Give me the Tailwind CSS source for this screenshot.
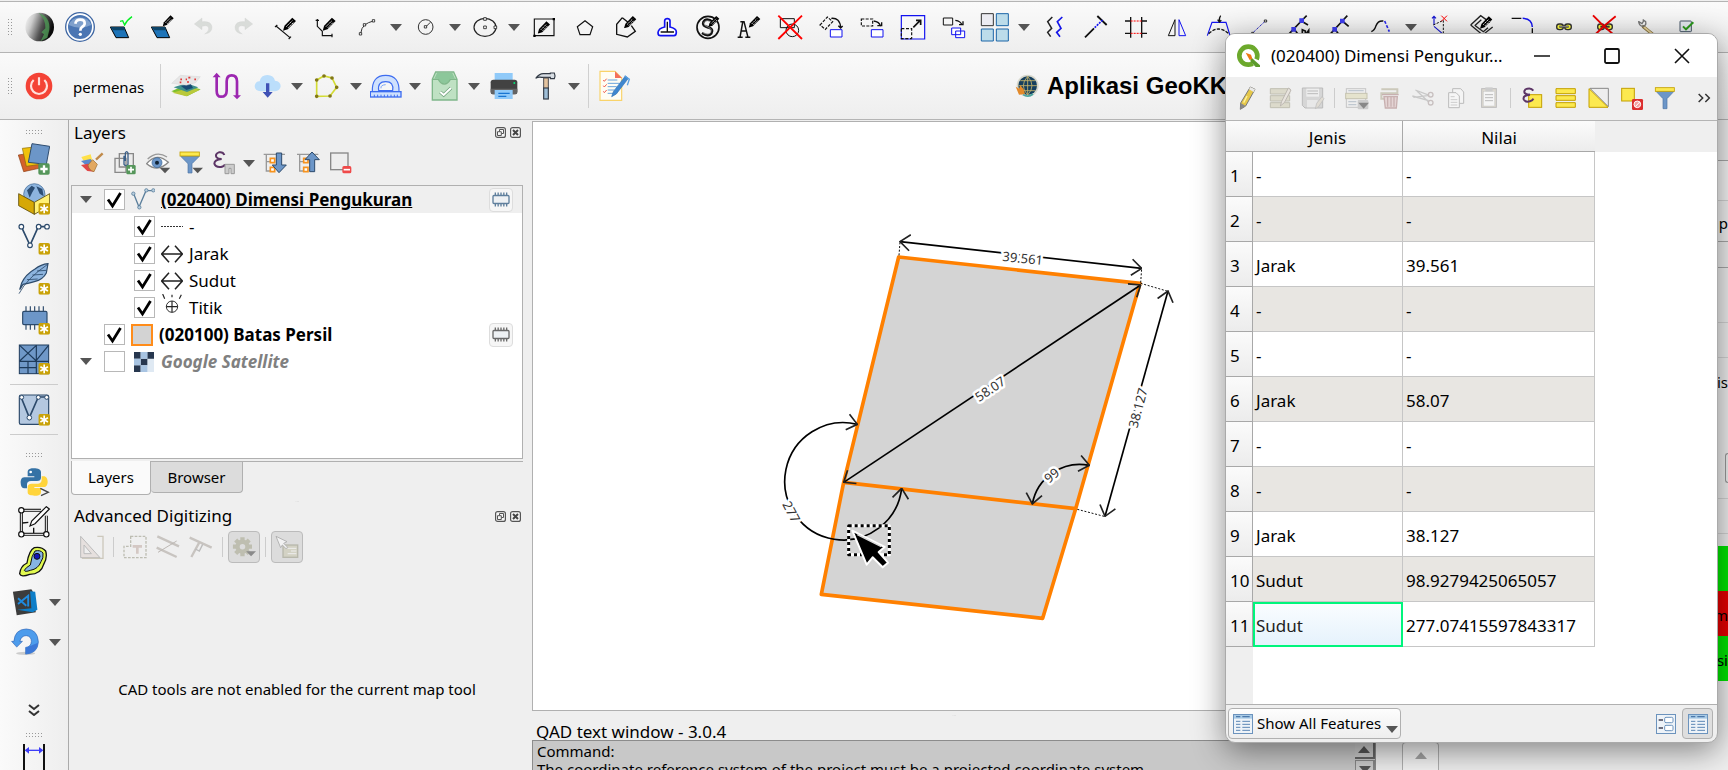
<!DOCTYPE html>
<html lang="id">
<head>
<meta charset="utf-8">
<title>GeoKK</title>
<script src="https://cdn.jsdelivr.net/npm/@tailwindcss/browser@4"></script>
</head>
<body class="relative flex h-screen flex-col overflow-hidden bg-[#efefef] font-['Noto_Sans','Open_Sans',sans-serif] text-[15px] text-black">

<svg class="hidden">
  <symbol id="pen" viewBox="0 0 36 36"><path d="M0 36L4 23L25 1L35 10L13 32Z" fill="#000"/><path d="M9 25L25 9M14 28L29 13" stroke="#fff" stroke-width="2.500" stroke-dasharray="5 2"/></symbol>
  <symbol id="tick" viewBox="0 0 21 21"><path d="M4 10.500L8.500 17L16.500 4" fill="none" stroke="#000" stroke-width="2.800"/></symbol>
  <symbol id="arr" viewBox="0 0 12 7"><path d="M0 0H12L6 7Z" fill="#555"/></symbol>
  <symbol id="star" viewBox="0 0 12 12"><rect width="12" height="12" rx="2" fill="#c9a208"/><path d="M6 1.500V10.500M2.100 3.800L9.900 8.200M9.900 3.800L2.100 8.200" stroke="#fff" stroke-width="1.700"/></symbol>
  <symbol id="chip" viewBox="0 0 54 44"><path d="M10 1V43M18.500 1V43M27 1V43M35.500 1V43M44 1V43" stroke="currentColor" stroke-width="4"/><rect x="3" y="10" width="48" height="24" rx="3" fill="#eef1f4" stroke="currentColor" stroke-width="4"/></symbol>
  <symbol id="dim" viewBox="0 0 66 54"><path d="M2 27H64M24 2L2 27L24 52M42 2L64 27L42 52" stroke="#222" stroke-width="4.500" fill="none"/></symbol>
  <symbol id="float" viewBox="0 0 11 11"><rect x=".6" y=".6" width="9.800" height="9.800" rx="2" fill="#f6f6f6" stroke="#555" stroke-width="1.200"/><path d="M4.500 4.500V2.500H8.500V6.500H6.500M2.500 4.700H6.300V8.500H2.500Z" fill="none" stroke="#555"/></symbol>
  <symbol id="closeb" viewBox="0 0 11 11"><rect x=".6" y=".6" width="9.800" height="9.800" rx="2" fill="#f6f6f6" stroke="#555" stroke-width="1.200"/><path d="M3 3L8 8M8 3L3 8" stroke="#444" stroke-width="2"/></symbol>
  <symbol id="tableico" viewBox="0 0 60 60"><rect x="1.500" y="1.500" width="57" height="57" fill="#eef3f8" stroke="#6c93bd" stroke-width="3"/><rect x="3" y="3" width="54" height="11" fill="#a9cbe6"/><path d="M9 8H22M28 8H50" stroke="#4d79ab" stroke-width="4"/><path d="M9 22H22M9 31H22M9 40H22M9 49H22M28 22H51M28 31H51M28 40H51M28 49H51" stroke="#5d87b5" stroke-width="3"/></symbol>
  <symbol id="grip" viewBox="0 0 5 17"><path d="M.5 0V17M3.500 0V17" stroke="#999" stroke-dasharray="1 2"/></symbol>
  <symbol id="griph" viewBox="0 0 17 5"><path d="M0 .5H17M0 3.500H17" stroke="#999" stroke-dasharray="1 2"/></symbol>
</svg>

<!-- QAD toolbar -->
<header class="shrink-0">
<div class="mt-px flex h-[52px] items-center overflow-hidden border-y border-[#b4b4b4] bg-gradient-to-b from-[#fafafa] to-[#eeeeee] pl-2 [&_button]:flex [&_button]:h-8 [&_button]:w-[41px] [&_button]:shrink-0 [&_button]:items-center [&_button]:justify-center [&_button.drop]:w-[18px] [&_button>svg]:size-8 [&_button.drop>svg]:h-[7px] [&_button.drop>svg]:w-3" role="toolbar" aria-label="QAD">
  <svg class="mr-[5px] h-[17px] w-[5px] shrink-0"><use href="#grip"/></svg>
  <button aria-label="Globe"><svg viewBox="69 32 96 96"><defs><linearGradient id="gg" x2="1" y2=".35"><stop offset="0" stop-color="#fff"/><stop offset=".3" stop-color="#ccc"/><stop offset=".65" stop-color="#555"/><stop offset="1" stop-color="#0a0a0a"/></linearGradient></defs><circle cx="119" cy="80" r="43" fill="url(#gg)"/><path d="M116 38Q152 50 148 88L142 112L122 122L132 102L124 96L136 84Q138 58 116 38Z" fill="#4f9a56" opacity=".8"/></svg></button>
  <button aria-label="Help"><svg viewBox="192 32 96 96"><circle cx="240" cy="80" r="43" fill="#fff" stroke="#3f67a3" stroke-width="4"/><circle cx="240" cy="80" r="36" fill="#4b76b3"/><path d="M206 74A36 34 0 0 1 274 74Q240 90 206 74" fill="#7fa0cc"/><path d="M226 70Q228 58 241 58Q254 58 254 69Q254 76 246 80Q241 83 241 91" fill="none" stroke="#fff" stroke-width="8"/><circle cx="241" cy="102" r="5" fill="#fff"/></svg></button>
  <button aria-label="Grip edit"><svg viewBox="315 32 96 96"><path d="M331 80H372L386 112H348Z" fill="#1e74b8" stroke="#000" stroke-width="3"/><path d="M331 80H372L376 90H340Z" fill="#0c4468"/><path d="M360 63L368 61L374 74Q380 60 396 49" fill="none" stroke="#00f020" stroke-width="4"/></svg></button>
  <button aria-label="Layer edit"><svg viewBox="438 32 96 96"><path d="M454 80H495L509 112H471Z" fill="#1e74b8" stroke="#000" stroke-width="3"/><path d="M454 80H495L499 90H463Z" fill="#0c4468"/><use href="#pen" x="488" y="44" width="34" height="34"/></svg></button>
  <button aria-label="Undo"><svg viewBox="561 32 96 96"><path d="M606 53L583 71L606 88V78Q626 72 626 86Q626 94 614 101Q636 98 636 80Q634 62 606 64Z" fill="#d9dcd9" stroke="#cfcfcf"/></svg></button>
  <button aria-label="Redo"><svg viewBox="684 32 96 96"><path d="M735 53L758 71L735 88V78Q715 72 715 86Q715 94 727 101Q705 98 705 80Q707 62 735 64Z" fill="#d9dcd9" stroke="#cfcfcf"/></svg></button>
  <button aria-label="Line"><svg viewBox="807 32 96 96"><path d="M828 77L870 112M825 80L832 74M866 116L873 109" stroke="#111" stroke-width="3.500"/><use href="#pen" x="849" y="50" width="40" height="42"/></svg></button>
  <button aria-label="Polyline"><svg viewBox="930 32 96 96"><path d="M952 56V78L967 93V106H998M947 60H957M996 100V111" fill="none" stroke="#111" stroke-width="3.500"/><use href="#pen" x="968" y="50" width="40" height="42"/></svg></button>
  <button aria-label="Arc"><svg viewBox="1053 32 96 96"><path d="M1082 100Q1084 82 1094 74Q1104 66 1120 62" fill="none" stroke="#333" stroke-width="3"/><path d="M1078 97H1085V104H1078ZM1090 70H1097V77H1090ZM1117 58H1124V65H1117Z" fill="#fff" stroke="#222" stroke-width="2.500"/></svg></button><button class="drop" aria-label="Arc options"><svg><use href="#arr"/></svg></button>
  <button aria-label="Circle"><svg viewBox="1230 32 96 96"><circle cx="1277" cy="80" r="22" fill="none" stroke="#333" stroke-width="3"/><path d="M1277 80L1291 66" stroke="#333" stroke-width="3"/><path d="M1273 76H1280V83H1273Z" fill="#fff" stroke="#222" stroke-width="2.500"/></svg></button><button class="drop" aria-label="Circle options"><svg><use href="#arr"/></svg></button>
  <button aria-label="Ellipse"><svg viewBox="117 32 96 96"><ellipse cx="165" cy="81" rx="33" ry="27" fill="none" stroke="#222" stroke-width="3.500"/><path d="M161 77H169V85H161ZM161 52H169V60H161ZM192 77H200V85H192Z" fill="#fff" stroke="#222" stroke-width="2.500"/></svg></button><button class="drop" aria-label="Ellipse options"><svg><use href="#arr"/></svg></button>
  <button aria-label="Rectangle"><svg viewBox="294 32 96 96"><path d="M313 56H372V106H313Z" fill="none" stroke="#111" stroke-width="3.500"/><path d="M368 53H375V60H368ZM310 103H317V110H310Z"/><use href="#pen" x="323" y="62" width="38" height="38"/></svg></button>
  <button aria-label="Polygon"><svg viewBox="417 32 96 96"><path d="M465 61L488 79L480 103H450L442 79Z" fill="none" stroke="#111" stroke-width="3.500"/></svg></button>
  <button aria-label="Draw polygon"><svg viewBox="540 32 96 96"><path d="M577 52L560 72V102L592 110L616 93L604 76M577 52L594 66" fill="none" stroke="#111" stroke-width="4"/><use href="#pen" x="582" y="46" width="38" height="38"/></svg></button>
  <button aria-label="Stamp"><svg viewBox="663 32 96 96"><path d="M704 80V61Q705 55 712 55Q719 55 720 61V80Q739 84 739 95Q739 106 732 106H692Q684 106 684 97Q685 84 704 80Z" fill="#fff" stroke="#1212f0" stroke-width="5"/><path d="M712 64V94M692 95H732" stroke="#111" stroke-width="4"/></svg></button>
  <button aria-label="Symbol"><svg viewBox="786 32 96 96"><circle cx="834" cy="81" r="33" fill="none" stroke="#111" stroke-width="5"/><path d="M850 66Q828 50 820 66Q816 77 834 81Q852 86 844 99Q834 110 816 98" fill="none" stroke="#111" stroke-width="8"/><path d="M849 68Q828 55 822 67Q820 76 836 81Q848 86 842 97Q834 105 819 97" fill="none" stroke="#fff" stroke-width="1.500"/><use href="#pen" x="834" y="46" width="36" height="34"/></svg></button>
  <button aria-label="Text"><svg viewBox="909 32 96 96"><path d="M931 64H942L954 111M938 66L930 111M923 111H938M946 111H961M933 92H949" fill="none" stroke="#111" stroke-width="4.500"/><use href="#pen" x="955" y="46" width="38" height="36"/></svg></button>
  <button aria-label="Erase"><svg viewBox="1032 32 96 96"><path d="M1051 55H1093V82H1051Z" fill="none" stroke="#111" stroke-width="3"/><circle cx="1087" cy="90" r="19" fill="none" stroke="#111" stroke-width="3"/><path d="M1045 46L1116 116M1116 46L1045 116" stroke="#f00" stroke-width="5.500"/></svg></button>
  <button aria-label="Rotate"><svg viewBox="1155 32 96 96"><path d="M1170 74L1192 50L1208 64L1186 87Z" fill="none" stroke="#111" stroke-width="3.500" stroke-dasharray="9 4"/><path d="M1204 54Q1230 52 1232 82M1225 76L1232 83L1238 77" fill="none" stroke="#111" stroke-width="4"/><path d="M1201 88H1236V110H1201Z" fill="#fff" stroke="#1212f0" stroke-width="3"/></svg></button>
  <button aria-label="Move"><svg viewBox="-12 32 96 96"><path d="M4 56H38V77H4Z" fill="none" stroke="#111" stroke-width="3.500" stroke-dasharray="9 4"/><path d="M41 62Q58 64 62 78M52 76H65V66" fill="none" stroke="#111" stroke-width="4"/><path d="M34 88H69V110H34Z" fill="#fff" stroke="#1212f0" stroke-width="3"/></svg></button>
  <button aria-label="Scale"><svg viewBox="111 32 96 96"><path d="M124 46H194V116H124Z" fill="#f8f8f8" stroke="#1212f0" stroke-width="3.500"/><path d="M124 85H155V115M124 85V115H155" fill="none" stroke="#111" stroke-width="3.500" stroke-dasharray="9 5"/><path d="M160 81L180 61M168 60H182V74" fill="none" stroke="#111" stroke-width="5"/></svg></button>
  <button aria-label="Copy"><svg viewBox="234 32 96 96"><path d="M250 53H278V74H250Z" fill="none" stroke="#111" stroke-width="3"/><path d="M286 60Q302 62 306 74M297 73H309V63" fill="none" stroke="#111" stroke-width="4"/><path d="M275 83H302V103H275ZM287 92H314V112H287Z" fill="#fff" stroke="#1212f0" stroke-width="3"/></svg></button>
  <button aria-label="Array"><svg viewBox="357 32 96 96"><path d="M364 40H400V76H364Z" fill="#ececf2" stroke="#333" stroke-width="3"/><path d="M409 40H445V76H409ZM364 86H400V122H364ZM409 86H445V122H409Z" fill="#bcdcea" stroke="#1c66a8" stroke-width="3"/></svg></button><button class="drop" aria-label="Array options"><svg><use href="#arr"/></svg></button>
  <button aria-label="Offset"><svg viewBox="534 32 96 96"><path d="M577 50L563 64L575 84L563 96L572 109" fill="none" stroke="#222" stroke-width="4.500"/><path d="M607 50L592 64L603 84L590 96L600 109" fill="none" stroke="#1515e8" stroke-width="5"/></svg></button>
  <button aria-label="Extend"><svg viewBox="657 32 96 96"><path d="M675 111L702 84M712 47L740 74" stroke="#111" stroke-width="5.500"/><path d="M704 82L728 59" stroke="#1515f0" stroke-width="5" stroke-dasharray="6 3"/></svg></button>
  <button aria-label="Trim"><svg viewBox="780 32 96 96"><path d="M812 50V112M845 50V112M795 62H812M795 99H812M845 62H861M845 99H861" stroke="#111" stroke-width="4"/><path d="M812 62H845M812 99H845" stroke="#f00" stroke-width="3" stroke-dasharray="6 3"/></svg></button>
  <button aria-label="Mirror"><svg viewBox="903 32 96 96"><path d="M945 58V106H925Z" fill="none" stroke="#111" stroke-width="3"/><path d="M957 58V106H977Z" fill="none" stroke="#1212f0" stroke-width="3"/></svg></button>
  <button aria-label="Stretch"><svg viewBox="1026 32 96 96"><path d="M1042 106L1056 66H1098L1110 106" fill="none" stroke="#1212f0" stroke-width="3.500"/><path d="M1046 100Q1076 72 1106 100" fill="none" stroke="#111" stroke-width="4" stroke-dasharray="10 4"/><path d="M1082 46Q1077 52 1078 64M1073 58L1078 65L1084 60" fill="none" stroke="#111" stroke-width="4"/></svg></button>
  <button aria-label="Break"><svg viewBox="69 32 96 96"><path d="M98 98L136 62" stroke="#2020c0" stroke-width="3" stroke-dasharray="4 2"/><path d="M95 96H101V103H95ZM133 59H140V65H133Z" fill="#fff" stroke="#111" stroke-width="2.500"/></svg></button>
  <button aria-label="Join"><svg viewBox="192 32 96 96"><path d="M208 100L244 62L260 46M244 62L264 74M222 86L236 104M247 108V88L256 92V104L266 90V108" fill="none" stroke="#111" stroke-width="5"/><path d="M238 54H252V68H238ZM214 80H228V94H214Z" fill="#3d3df0"/></svg></button>
  <button aria-label="Disjoin"><svg viewBox="315 32 96 96"><path d="M330 102L367 62L382 46M367 62L386 78M344 86L358 104" fill="none" stroke="#111" stroke-width="5"/><path d="M360 55H374V69H360ZM337 80H351V94H337Z" fill="#3d3df0"/></svg></button>
  <button aria-label="Edit polyline"><svg viewBox="438 32 96 96"><path d="M454 94Q464 90 468 76Q474 60 490 62" fill="none" stroke="#111" stroke-width="4.500"/><path d="M494 62L508 94" stroke="#2a2af0" stroke-width="5" stroke-dasharray="9 5"/></svg></button><button class="drop" aria-label="Edit options"><svg><use href="#arr"/></svg></button>
  <button aria-label="Delete vertex"><svg viewBox="615 32 96 96"><path d="M642 50V74M636 54L642 48L648 54M642 78L670 102" fill="none" stroke="#1515d0" stroke-width="3.500"/><path d="M640 74L670 60V104" fill="none" stroke="#111" stroke-width="3" stroke-dasharray="7 4"/><path d="M664 46L681 63M681 46L664 63" stroke="#f00" stroke-width="3"/></svg></button>
  <button aria-label="Edit shape"><svg viewBox="738 32 96 96"><path d="M752 74L782 46L810 66M752 74L788 104L818 80M764 76L784 58M766 76L790 94L804 82" fill="none" stroke="#222" stroke-width="4"/><use href="#pen" x="780" y="46" width="38" height="40"/></svg></button>
  <button aria-label="Fillet"><svg viewBox="861 32 96 96"><path d="M875 54H904M937 84V104" stroke="#111" stroke-width="4"/><path d="M908 54Q936 54 937 80" fill="none" stroke="#1212f0" stroke-width="4.500"/></svg></button>
  <button aria-label="Link"><svg viewBox="984 32 96 96"><rect x="1010" y="71" width="20" height="17" rx="8" fill="#ffff40" stroke="#333" stroke-width="4"/><rect x="1034" y="71" width="20" height="17" rx="8" fill="#ffff40" stroke="#333" stroke-width="4"/><path d="M1018 79H1046" stroke="#333" stroke-width="6"/><path d="M1019 79H1045" stroke="#ccc" stroke-width="2"/></svg></button>
  <button aria-label="Unlink"><svg viewBox="1107 32 96 96"><rect x="1133" y="71" width="20" height="17" rx="8" fill="#ffff40" stroke="#333" stroke-width="4"/><rect x="1157" y="71" width="20" height="17" rx="8" fill="#ffff40" stroke="#333" stroke-width="4"/><path d="M1141 79H1169" stroke="#333" stroke-width="6"/><path d="M1119 45Q1146 74 1182 104M1187 48Q1154 74 1124 104" fill="none" stroke="#e00" stroke-width="5.500"/></svg></button>
  <button aria-label="Settings"><svg viewBox="1230 32 96 96"><path d="M1270 79L1298 102" stroke="#8a7440" stroke-width="10" stroke-linecap="round"/><path d="M1272 80L1296 100" stroke="#e6d29a" stroke-width="5"/><path d="M1256 62Q1256 76 1268 78Q1280 76 1277 64L1268 58M1256 64L1266 70L1272 60" fill="none" stroke="#777" stroke-width="4"/></svg></button>
  <button aria-label="Validate"><svg viewBox="1353 32 96 96"><rect x="1380" y="62" width="34" height="32" rx="2" fill="#e4e9f0" stroke="#456" stroke-width="3"/><path d="M1389 78L1398 87L1420 66" fill="none" stroke="#2c9a1c" stroke-width="6"/></svg></button>
</div>

<!-- GeoKK toolbar -->
<div class="flex h-[67px] items-center border-b border-[#b4b4b4] bg-gradient-to-b from-[#fafafa] to-[#eeeeee] pl-2 [&_button]:flex [&_button]:h-8 [&_button]:w-[41px] [&_button]:shrink-0 [&_button]:items-center [&_button]:justify-center [&_button.drop]:w-[18px] [&_button>svg]:size-8 [&_button.drop>svg]:h-[7px] [&_button.drop>svg]:w-3" role="toolbar" aria-label="GeoKK">
  <svg class="mr-[5px] h-[17px] w-[5px] shrink-0"><use href="#grip"/></svg>
  <button aria-label="Logout"><svg viewBox="69 210 96 96"><circle cx="117" cy="258" r="40" fill="#f44336"/><path d="M101 240A24 24 0 1 0 133 240M117 232V256" fill="none" stroke="#ffe0dc" stroke-width="6.500"/></svg></button>
  <span class="ml-[14px] mt-[2px] w-[87px]">permenas</span>
  <span class="mr-1 h-11 w-px bg-[#d0d0d0]"></span>
  <button aria-label="Maps"><svg viewBox="511 210 96 96"><path d="M515 274L556 256L603 268L562 289Z" fill="#7cc12c"/><path d="M518 278L560 289L600 270L575 262Z" fill="#b9c93a"/><path d="M522 262L560 250L596 262L562 276Z" fill="#3f8f8c"/><path d="M544 258L572 250L580 264L560 270Z" fill="#174a74"/><path d="M516 250L542 226L602 230L588 248L560 256Z" fill="#e6e6e6" stroke="#ccc"/><path d="M542 238H547M566 233H572M584 238H589M540 247H545M562 246H568M558 238H562" stroke="#e23a3a" stroke-width="5"/></svg></button>
  <button aria-label="Route"><svg viewBox="634 210 96 96"><path d="M651 226V272Q651 290 664 290Q681 290 681 272V244Q681 226 696 226Q712 226 712 244V290" fill="none" stroke="#9c27b0" stroke-width="8"/><path d="M639 232L651 218L663 232ZM700 286H724L712 298Z" fill="#9c27b0"/></svg></button>
  <button aria-label="Download"><svg viewBox="757 210 96 96"><path d="M783 274Q765 272 765 258Q767 244 780 244Q784 225 803 225Q822 226 826 242Q843 244 843 259Q841 273 826 274Z" fill="#bbdefb"/><path d="M799 250H809V276H819L804 293L789 276H799Z" fill="#3f51b5"/></svg></button><button class="drop" aria-label="Download options"><svg><use href="#arr"/></svg></button>
  <button aria-label="Parcel"><svg viewBox="934 210 96 96"><path d="M951 289V240L973 228L997 234L1011 262L991 288Z" fill="none" stroke="#d3dc34" stroke-width="5"/><path d="M951 240h.1M973 228h.1M997 234h.1M1011 262h.1M991 288h.1M951 289h.1" stroke="#827717" stroke-width="11" stroke-linecap="round"/></svg></button><button class="drop" aria-label="Parcel options"><svg><use href="#arr"/></svg></button>
  <button aria-label="Measure"><svg viewBox="1111 210 96 96"><path d="M1118 276Q1116 226 1158 226Q1200 226 1198 276Z" fill="#cfe1fd" stroke="#3d6cf0" stroke-width="3.500"/><path d="M1137 272Q1133 245 1158 245Q1183 245 1179 272Z" fill="#f6f6f6" stroke="#3d6cf0" stroke-width="3.500"/><path d="M1144 265Q1142 255 1158 254" fill="none" stroke="#7ba5f6" stroke-width="3"/><rect x="1112" y="275" width="92" height="16" fill="#cfe1fd" stroke="#3d6cf0" stroke-width="4"/><path d="M1124 291V284M1134 291V284M1144 291V284M1154 291V284M1164 291V284M1174 291V284M1184 291V284M1193 291V284" stroke="#3d6cf0" stroke-width="3"/></svg></button><button class="drop" aria-label="Measure options"><svg><use href="#arr"/></svg></button>
  <button aria-label="Inbox"><svg viewBox="-2 210 96 96"><path d="M8 238L18 216H72L82 238V300H8Z" fill="#bfe1c3" stroke="#7fb78a" stroke-width="4"/><path d="M14 236L22 219H68L76 236H62Q54 250 44 250Q34 250 26 236Z" fill="#8cc79a"/><path d="M8 238H26Q34 252 44 252Q54 252 62 238H82" fill="none" stroke="#7fb78a" stroke-width="4"/><path d="M32 276L42 285L64 264" fill="none" stroke="#6fa07a" stroke-width="10"/><path d="M32 276L42 285L64 264" fill="none" stroke="#fff" stroke-width="6"/></svg></button><button class="drop" aria-label="Inbox options"><svg><use href="#arr"/></svg></button>
  <button aria-label="Print"><svg viewBox="175 210 96 96"><rect x="195" y="219" width="54" height="26" fill="#90caf9"/><rect x="183" y="239" width="80" height="44" rx="8" fill="#424242"/><path d="M183 266H263V276Q262 283 254 283H191Q184 283 183 276Z" fill="#646464"/><circle cx="254" cy="249" r="3" fill="#00e676"/><rect x="195" y="270" width="54" height="27" fill="#90caf9"/><path d="M206 280H240M206 289H230" stroke="#1976d2" stroke-width="4"/></svg></button>
  <button aria-label="Tools"><svg viewBox="298 210 96 96"><path d="M318 235Q330 219 344 221H362V219H374Q378 227 374 236H362V232H336Q326 230 318 235Z" fill="#d8dee4" stroke="#333b46" stroke-width="3.500"/><rect x="342" y="234" width="14" height="32" fill="#e4c4a0" stroke="#4c4c50" stroke-width="3"/><rect x="342" y="264" width="14" height="33" fill="#9fbfd8" stroke="#333b46" stroke-width="3.500"/></svg></button><button class="drop" aria-label="Tools options"><svg><use href="#arr"/></svg></button>
  <span class="mx-[5px] h-11 w-px bg-[#d0d0d0]"></span>
  <button aria-label="Form"><svg viewBox="505 210 96 96"><path d="M508 214H553L573 234V301H508Z" fill="#fffdf4" stroke="#f9d36a" stroke-width="3.500"/><path d="M553 214L574 234H553Z" fill="#f4705c"/><path d="M531 240H560M531 250H566M531 260H558M531 270H552M531 280H548" stroke="#69a3dc" stroke-width="3"/><path d="M518 240L521 244L528 236M518 257L521 261L528 253M518 274L521 278L528 270" fill="none" stroke="#f05a4a" stroke-width="3"/><path d="M543 290L548 275L584 228L593 235L557 282Z" fill="#3f87cf" stroke="#2d6fb3" stroke-width="2"/><path d="M582 227L596 238L590 256" fill="none" stroke="#5aa0e0" stroke-width="4"/></svg></button>
  <h1 class="ml-[380px] flex items-center gap-2 whitespace-nowrap font-['Liberation_Sans',sans-serif] text-2xl font-bold"><svg class="size-6" viewBox="0 0 72 72"><circle cx="38" cy="35" r="33" fill="#d8d8cc"/><circle cx="38" cy="35" r="28" fill="#153f5e"/><path d="M38 7V63M10 35H66M16 20H60M16 50H60M38 7Q12 35 38 63Q64 35 38 7" fill="none" stroke="#c8b56a" stroke-width="2.500"/><path d="M2 38L12 44L16 34L26 46L30 60L12 62Z" fill="#e38a2a"/><path d="M24 62Q40 72 54 60" stroke="#4aa5a0" stroke-width="5" fill="none"/></svg>Aplikasi GeoKK</h1>
</div>
</header>

<main class="flex min-h-0 flex-1">
<!-- Vertical toolbar -->
<nav class="flex w-[69px] shrink-0 flex-col items-center overflow-hidden border-r border-[#aaa] bg-gradient-to-r from-[#fafafa] to-[#eeeeee] [&_button]:flex [&_button]:h-10 [&_button]:w-full [&_button]:shrink-0 [&_button]:items-center [&_button]:justify-center [&_button>svg.ico]:size-8" aria-label="Layer tools">
  <div class="flex h-[19px] shrink-0 items-center pt-[5px]"><svg class="h-[5px] w-[17px]"><use href="#griph"/></svg></div>
  <button aria-label="Data source manager"><svg class="ico" viewBox="57 84 96 96"><path d="M58 120L74 170L120 160V110Z" fill="#d4622a" stroke="#8a3c14" stroke-width="2"/><path d="M70 100L82 154L124 148V94Z" fill="#f0c20c" stroke="#8a6a08" stroke-width="2"/><path d="M99 86L152 94L142 148L88 142Z" fill="#6c96c8" stroke="#2f4d70" stroke-width="3"/><rect x="118" y="145" width="34" height="34" rx="5" fill="#55965a"/><path d="M135 151V173M124 162H146" stroke="#fff" stroke-width="7"/></svg></button>
  <button aria-label="New GeoPackage layer"><svg class="ico" viewBox="57 204 96 96"><circle cx="106" cy="238" r="32" fill="#8db4de" stroke="#39628f" stroke-width="2"/><path d="M84 226L98 212L108 218L100 232L92 248ZM112 214L130 222L134 244L122 236Z" fill="#2c4d73"/><path d="M59 236L106 262V298L59 272Z" fill="#d6a806" stroke="#5b4904" stroke-width="2.500"/><path d="M152 236L106 262V298L152 272Z" fill="#fff176" stroke="#5b4904" stroke-width="2.500"/><use href="#star" x="118" y="264" width="35" height="35"/></svg></button>
  <button aria-label="New shapefile layer"><svg class="ico" viewBox="57 324 96 96"><path d="M67 335L93 391L118 335H143" fill="none" stroke="#2c4a6b" stroke-width="5"/><g fill="#fff" stroke="#2c4a6b" stroke-width="3.500"><circle cx="67" cy="335" r="7"/><circle cx="93" cy="391" r="7"/><circle cx="119" cy="335" r="7"/><circle cx="144" cy="335" r="7"/></g><use href="#star" x="118" y="384" width="35" height="35"/></svg></button>
  <button aria-label="New SpatiaLite layer"><svg class="ico" viewBox="57 444 96 96"><path d="M62 524L68 504Q80 478 108 462Q126 448 147 446L142 474Q132 494 106 500Q84 506 72 508Z" fill="#8db4de" stroke="#2c4a6b" stroke-width="3.500"/><path d="M60 536Q84 490 146 448M84 494L116 492M100 480L132 478M114 468L142 466" stroke="#2c4a6b" stroke-width="2.500" fill="none"/><use href="#star" x="118" y="504" width="35" height="35"/></svg></button>
  <button aria-label="New memory layer"><svg class="ico" viewBox="57 564 96 96"><path d="M81 574V644M94 574V644M107 574V644M120 574V630M133 574V630" stroke="#2c4a6b" stroke-width="3.500"/><rect x="71" y="589" width="73" height="40" rx="4" fill="#6c96c8" stroke="#2c4a6b" stroke-width="3.500"/><use href="#star" x="118" y="624" width="35" height="35"/></svg></button>
  <button aria-label="New mesh layer"><svg class="ico" viewBox="57 684 96 96"><rect x="61" y="690" width="88" height="86" fill="#6f98c8" stroke="#1d3a5a" stroke-width="3"/><path d="M62 691L112 738M112 691L62 738M112 690V776M61 739H149M112 736L148 692M87 740V776M61 758H112" stroke="#1d3a5a" stroke-width="3.500"/><use href="#star" x="118" y="744" width="35" height="35"/></svg></button>
  <hr class="my-[5px] w-12 shrink-0 border-[#ccc]">
  <button aria-label="New virtual layer"><svg class="ico" viewBox="57 69 96 96"><rect x="61" y="72" width="88" height="88" rx="5" fill="#b4c8e0" stroke="#2c4a6b" stroke-width="3.500"/><path d="M66 78L91 140L118 78H144" fill="none" stroke="#2c4a6b" stroke-width="5"/><g fill="#fff" stroke="#2c4a6b" stroke-width="3"><circle cx="68" cy="79" r="6"/><circle cx="91" cy="140" r="7"/><circle cx="118" cy="79" r="6"/><circle cx="143" cy="79" r="6"/></g><use href="#star" x="118" y="129" width="35" height="35"/></svg></button>
  <hr class="my-1 w-12 shrink-0 border-[#ccc]">
  <div class="flex h-[23px] shrink-0 items-center pt-[10px]"><svg class="h-[5px] w-[17px]"><use href="#griph"/></svg></div>
  <button aria-label="Python console"><svg class="ico" viewBox="57 291 96 96"><path d="M104 298C86 298 86 306 86 312V322H106V325H76C66 325 65 336 65 341C65 352 70 358 76 358H84V346C84 340 88 336 96 336H114C122 336 126 332 126 326V310C126 302 118 298 104 298Z" fill="#3572a5"/><path d="M107 380C124 380 126 374 126 368V357H106V354H134C143 354 146 346 146 338C146 330 142 322 134 322H128V332C128 340 122 344 116 344H98C90 344 86 348 86 354V370C86 378 96 380 107 380Z" fill="#ffd43b"/><circle cx="95" cy="309" r="4" fill="#fff"/><path d="M124 358L148 370L126 380" fill="none" stroke="#444" stroke-width="4"/></svg></button>
  <button aria-label="Edit frame"><svg class="ico" viewBox="57 411 96 96"><path d="M67 424V496H142V440M67 424H126" fill="none" stroke="#111" stroke-width="9"/><path d="M70 462L88 460M104 494V476" fill="none" stroke="#111" stroke-width="4"/><path d="M67 424V496H142V440M67 424H126" fill="none" stroke="#fff" stroke-width="3"/><g fill="#fff" stroke="#111" stroke-width="3.500"><circle cx="67" cy="424" r="8"/><circle cx="67" cy="496" r="8"/><circle cx="142" cy="496" r="8"/><path d="M93 471L98 456L142 413L151 420L108 464Z"/></g></svg></button>
  <button aria-label="Contour"><svg class="ico" viewBox="57 531 96 96"><path d="M106 536Q128 532 140 546Q146 566 134 586Q126 616 92 616Q66 626 62 614Q64 592 84 582Q90 544 106 536Z" fill="#e2fa50" stroke="#111" stroke-width="4"/><path d="M108 546Q124 542 132 552Q134 568 126 578Q118 600 94 604Q78 610 76 604Q80 596 94 588Q98 558 108 546Z" fill="#86b4e4" stroke="#111" stroke-width="3"/><circle cx="114" cy="562" r="9" fill="#1414b8" stroke="#111" stroke-width="3"/></svg></button>
  <button aria-label="Code editor" class="gap-[10px] pl-1"><svg class="size-7" viewBox="36 84 84 88"><path d="M40 96L98 88L102 94L112 160L52 170Z" fill="#3c3c3c"/><path d="M94 94L110 96L117 152L102 160L54 152L98 148Z" fill="#0e7ec8"/><path d="M56 116L82 140M56 134L88 108V142" stroke="#1e8be0" stroke-width="6" fill="none"/></svg><svg class="h-[7px] w-3"><use href="#arr"/></svg></button>
  <button aria-label="Reload" class="gap-[10px] pl-1"><svg class="size-7" viewBox="34 206 84 88"><ellipse cx="78" cy="286" rx="30" ry="5" fill="#ccc"/><path d="M34 248L50 266L68 248H60Q64 230 80 230Q96 232 96 248Q95 266 78 267V288Q116 286 118 250Q116 210 80 209Q44 210 41 248Z" fill="#4d9cec" stroke="#2d62b4" stroke-width="2"/><path d="M79 268V287Q112 286 117 252Z" fill="#3c78d8"/></svg><svg class="h-[7px] w-3"><use href="#arr"/></svg></button>
  <button aria-label="More tools" class="mt-7"><svg class="h-3 w-3" viewBox="0 0 12 12"><path d="M1 1L6 5L11 1M1 7L6 11L11 7" fill="none" stroke="#333" stroke-width="2"/></svg></button>
  <svg class="mt-[3px] h-[5px] w-[17px] shrink-0"><use href="#griph"/></svg>
  <button aria-label="Dimension"><svg class="ico" viewBox="57 573 96 96"><path d="M75 579V669M135 579V669" stroke="#111" stroke-width="6"/><path d="M82 598H128" stroke="#3d3df8" stroke-width="4"/><path d="M77 598L90 588V608ZM133 598L120 588V608Z" fill="#3d3df8"/></svg></button>
</nav>

<!-- Docks -->
<aside class="flex w-[463px] shrink-0 flex-col pl-[2px] pr-[9px]">
  <section class="flex h-[339px] shrink-0 flex-col">
    <div class="flex h-6 items-center gap-1 pl-[3px]"><h2 class="flex-1 pt-[2px] text-[17px] leading-6">Layers</h2><button aria-label="Float"><svg class="size-[11px]"><use href="#float"/></svg></button><button aria-label="Close" class="pr-[2px]"><svg class="size-[11px]"><use href="#closeb"/></svg></button></div>
    <div class="flex h-[41px] items-center pb-[3px] pl-1 [&>button]:flex [&>button]:w-[33px] [&>button]:justify-center [&>button>svg]:size-6">
      <button aria-label="Style"><svg viewBox="240 110 72 72"><path d="M244 128L272 120L280 150L258 152Z" fill="#ffe14a"/><path d="M243 140L272 134L284 152L268 162Z" fill="#5a8ad0"/><path d="M243 152L264 148L282 172L262 170Z" fill="#e04848"/><path d="M308 117L288 136" stroke="#c08a4a" stroke-width="7"/><path d="M278 136L292 150L282 172Q266 168 264 152Z" fill="#e2a860" stroke="#9a6a2a" stroke-width="2"/></svg></button>
      <button aria-label="Add group"><svg viewBox="339 110 72 72"><path d="M345 132H378V174H345Z M358 118H400V158H358Z" fill="#ececec" stroke="#888" stroke-width="4"/><path d="M372 124V150Q378 158 384 150V116Q380 108 376 116V140" fill="none" stroke="#3b5f88" stroke-width="4"/><rect x="379" y="152" width="28" height="28" rx="4" fill="#55965a"/><path d="M393 157V175M384 166H402" stroke="#fff" stroke-width="5"/></svg></button>
      <button aria-label="Visibility"><svg viewBox="441 110 72 72"><path d="M443 148Q474 112 508 144Q476 176 443 148Z" fill="#fff" stroke="#888" stroke-width="4"/><circle cx="474" cy="145" r="15" fill="#6c96c8" stroke="#39628f" stroke-width="2"/><circle cx="474" cy="145" r="6" fill="#123"/><path d="M446 134Q474 108 504 128" fill="none" stroke="#999" stroke-width="4"/><path d="M482 160H514L498 177Z" fill="#555"/></svg></button>
      <button aria-label="Filter"><svg viewBox="541 110 72 72"><path d="M546 126H602L580 148V176H568V148Z" fill="#6c96c8" stroke="#4c74a4" stroke-width="2"/><rect x="544" y="113" width="58" height="12" fill="#fce94f" stroke="#c4a000" stroke-width="2.500"/><path d="M581 160H613L597 177Z" fill="#555"/></svg></button>
      <button aria-label="Expression filter"><svg viewBox="639 110 72 72"><path d="M676 122Q672 112 660 114Q648 118 652 128Q656 134 668 134Q646 136 646 148Q650 160 666 158Q676 156 678 150" fill="none" stroke="#5c3566" stroke-width="6"/><path d="M678 178V150H706V178H696V162H690V178Z" fill="#ccc" stroke="#999" stroke-width="3"/></svg></button>
      <svg class="mx-[3px] h-[7px] w-3"><use href="#arr"/></svg>
      <button aria-label="Expand all"><svg viewBox="10 108 72 72"><path d="M12 118H76M20 120V168H34M20 140H34" fill="none" stroke="#999" stroke-width="4"/><path d="M32 130H45V143H32ZM32 157H45V170H32Z" fill="#fff" stroke="#f7931e" stroke-width="5"/><path d="M50 114H66V150H80L58 173L38 150H50Z" fill="#6c96c8" stroke="#2c4a6b" stroke-width="3"/></svg></button>
      <button aria-label="Collapse all"><svg viewBox="109 108 72 72"><path d="M112 118H176M120 120V168H134M120 140H134" fill="none" stroke="#999" stroke-width="4"/><path d="M132 130H145V143H132ZM132 157H145V170H132Z" fill="#fff" stroke="#f7931e" stroke-width="5"/><path d="M150 170H165V134H179L157 111L136 134H150Z" fill="#6c96c8" stroke="#2c4a6b" stroke-width="3"/></svg></button>
      <button aria-label="Remove layer"><svg viewBox="208 108 72 72"><rect x="213" y="114" width="52" height="50" fill="#eee" stroke="#888" stroke-width="4"/><rect x="248" y="153" width="27" height="22" rx="5" fill="#ef4a4a"/><path d="M252 164H271" stroke="#fff" stroke-width="5"/></svg></button>
    </div>
    <ul class="flex-1 border border-[#b0b0b0] bg-white text-[17px] leading-6 [&>li]:flex [&>li]:h-[27px] [&>li]:items-center [&_.box]:mr-[6px] [&_.box]:grid [&_.box]:size-[21px] [&_.box]:shrink-0 [&_.box>*]:col-start-1 [&_.box>*]:row-start-1 [&_.box>*]:size-[21px] [&_input]:appearance-none [&_input]:border [&_input]:border-[#b8b8b8] [&_input]:bg-white [&_label]:pt-px">
      <li class="bg-[#efefef]"><svg class="ml-2 mr-3 h-[7px] w-3"><use href="#arr"/></svg><span class="box"><input type="checkbox" id="l1" class="peer" checked><svg class="pointer-events-none hidden peer-checked:block"><use href="#tick"/></svg></span><svg class="mr-[6px] size-6" viewBox="392 220 72 72"><path d="M400 237L416 277L437 228H460" fill="none" stroke="#5b7f9c" stroke-width="4"/><g fill="#b8cedf" stroke="#5b7f9c" stroke-width="2.500"><circle cx="399" cy="237" r="5"/><circle cx="417" cy="278" r="5"/><circle cx="438" cy="227" r="5"/><circle cx="459" cy="227" r="5"/></g></svg><label for="l1" class="flex-1 font-bold underline">(020400) Dimensi Pengukuran</label><button aria-label="Temporary layer" class="mr-[9px] flex size-6 items-center justify-center rounded-sm border border-[#ddd] bg-[#f6f6f6] text-[#5f7f9d]"><svg class="h-[15px] w-[18px]"><use href="#chip"/></svg></button></li>
      <li class="pl-[62px]"><span class="box"><input type="checkbox" id="l2" class="peer" checked><svg class="pointer-events-none hidden peer-checked:block"><use href="#tick"/></svg></span><svg class="mr-[6px] h-[18px] w-[22px]"><path d="M0 8.500H22" stroke="#333" stroke-dasharray="2 1"/></svg><label for="l2">-</label></li>
      <li class="pl-[62px]"><span class="box"><input type="checkbox" id="l3" class="peer" checked><svg class="pointer-events-none hidden peer-checked:block"><use href="#tick"/></svg></span><svg class="mr-[6px] h-[18px] w-[22px]"><use href="#dim"/></svg><label for="l3">Jarak</label></li>
      <li class="pl-[62px]"><span class="box"><input type="checkbox" id="l4" class="peer" checked><svg class="pointer-events-none hidden peer-checked:block"><use href="#tick"/></svg></span><svg class="mr-[6px] h-[18px] w-[22px]"><use href="#dim"/></svg><label for="l4">Sudut</label></li>
      <li class="pl-[62px]"><span class="box"><input type="checkbox" id="l5" class="peer" checked><svg class="pointer-events-none hidden peer-checked:block"><use href="#tick"/></svg></span><svg class="mb-2 mr-[6px] h-[19px] w-[22px]" viewBox="483 538 66 57"><circle cx="516" cy="576" r="17" fill="none" stroke="#333" stroke-width="3"/><path d="M499 576H533M516 559V593M488 538L494 552M544 540L538 552M516 540V548" stroke="#222" stroke-width="3.500"/></svg><label for="l5">Titik</label></li>
      <li class="pl-8"><span class="box"><input type="checkbox" id="l6" class="peer" checked><svg class="pointer-events-none hidden peer-checked:block"><use href="#tick"/></svg></span><span class="mr-[6px] size-[22px] border-2 border-[#ff8c1a] bg-[#d3d3d3]"></span><label for="l6" class="flex-1 font-bold">(020100) Batas Persil</label><button aria-label="Temporary layer" class="mr-[9px] flex size-6 items-center justify-center rounded-sm border border-[#ddd] bg-[#f6f6f6] text-[#6a6a6a]"><svg class="h-[15px] w-[18px]"><use href="#chip"/></svg></button></li>
      <li><svg class="ml-2 mr-3 h-[7px] w-3"><use href="#arr"/></svg><span class="box"><input type="checkbox" id="l7"></span><svg class="ml-[3px] mr-[7px] size-5" viewBox="0 0 3 3"><rect width="3" height="3" fill="#dfe9f3"/><path d="M0 0H1V1H0ZM1 1H2V2H1ZM2 0H3V1H2ZM0 2H1V3H0Z" fill="#27374f"/><path d="M1 0H2V1H1ZM0 1H1V2H0ZM1 2H2V3H1Z" fill="#a8c4e2"/></svg><label for="l7" class="font-bold italic text-[#808080]">Google Satellite</label></li>
    </ul>
  </section>
  <div class="mt-[2px] flex items-start"><button class="h-[34px] w-20 rounded-b border border-t-0 border-[#b0b0b0] bg-[#fafafa]">Layers</button><div class="flex-1 border-t border-[#b0b0b0]"><button class="h-[31px] w-[92px] rounded-b border border-l-0 border-t-0 border-[#b0b0b0] bg-[#dcdcdc]">Browser</button></div></div>
  <div class="flex h-[7px] shrink-0 items-end justify-center"><svg class="h-px w-[17px]"><use href="#griph"/></svg></div>
  <section class="flex flex-1 flex-col">
    <div class="flex h-[26px] items-end gap-1 pl-[3px]"><h2 class="flex-1 text-[17px] leading-6">Advanced Digitizing</h2><button aria-label="Float" class="pb-[6px]"><svg class="size-[11px]"><use href="#float"/></svg></button><button aria-label="Close" class="pb-[6px] pr-[2px]"><svg class="size-[11px]"><use href="#closeb"/></svg></button></div>
    <div class="flex h-9 items-center gap-[9px] pl-[9px] pt-[2px] [&>button>svg]:size-6">
      <button aria-label="Enable"><svg viewBox="240 496 72 72"><path d="M242 500V564H300ZM252 526V552H274Z" fill="#e6e0de" fill-rule="evenodd" stroke="#bbb" stroke-width="3"/><path d="M292 500H309V566H246" fill="none" stroke="#ccc8bc" stroke-width="4"/></svg></button>
      <i class="h-5 w-px bg-[#ccc]"></i>
      <button aria-label="Construction"><svg viewBox="369 496 72 72"><path d="M392 500H438V564H372V530H392Z" fill="none" stroke="#bdbdb2" stroke-width="4" stroke-dasharray="8 4"/><path d="M398 526H426V534H416V552H408V534H398Z" fill="#d4c8c4"/></svg></button>
      <button aria-label="Parallel"><svg viewBox="468 496 72 72"><path d="M472 500L537 530M470 534L530 562" stroke="#c8c4c0" stroke-width="7"/><path d="M474 548L530 514" stroke="#bdb8b4" stroke-width="3"/></svg></button>
      <button aria-label="Perpendicular"><svg viewBox="569 496 72 72"><path d="M571 504L637 534M600 518L576 562" stroke="#c8c4c0" stroke-width="7"/><path d="M610 524L600 544L588 538" fill="none" stroke="#bbb" stroke-width="4"/></svg></button>
      <i class="-mr-1 h-5 w-px bg-[#ccc]"></i>
      <button aria-label="Options" class="flex size-8 items-center justify-center rounded border border-[#bbb] bg-[#dcdcdc]"><svg viewBox="696 496 78 72"><g stroke="#bebeb0" stroke-width="14"><path d="M730 500V562M699 531H761M708 509L752 553M752 509L708 553"/></g><circle cx="730" cy="531" r="23" fill="#bebeb0"/><circle cx="730" cy="531" r="9" fill="#dcdcdc"/><path d="M742 546H774L758 562Z" fill="#8a8a8a"/></svg></button>
      <i class="-mx-1 h-5 w-px bg-[#ccc]"></i>
      <button aria-label="Floater" class="flex size-8 items-center justify-center rounded border border-[#bbb] bg-[#dcdcdc]"><svg viewBox="46 286 72 72"><rect x="70" y="316" width="44" height="37" fill="#d3d2c4" stroke="#b8b8ac" stroke-width="4"/><path d="M84 326H110M94 334H110M84 342H110" stroke="#eee" stroke-width="3"/><path d="M49 290L82 306L72 311L84 323L79 327L68 316L63 324Z" fill="#f2f2f2" stroke="#aaa" stroke-width="2.500"/></svg></button>
    </div>
    <p class="flex flex-1 items-center justify-center pt-11">CAD tools are not enabled for the current map tool</p>
  </section>
</aside>

<!-- Map canvas and text window -->
<section class="flex min-w-0 flex-1 flex-col pt-px">
  <div class="min-h-0 flex-1 border border-r-0 border-[#b0b0b0] bg-white">
    <svg class="block h-full w-full" font-family="'Noto Sans',sans-serif">
      <defs><marker id="ah" viewBox="0 0 34 54" refX="32" refY="27" markerWidth="34" markerHeight="54" markerUnits="userSpaceOnUse" orient="auto-start-reverse"><path d="M2 3L32 27L2 51" fill="none" stroke="#222" stroke-width="5"/></marker></defs>
      <g transform="translate(237 98) scale(.33333)" fill="none" stroke-linejoin="round">
        <path d="M386 111L1110 190L917 866L818 1195L154 1123L221 787Z" fill="#d4d4d4" stroke="#ff8000" stroke-width="11"/>
        <path d="M221 787L917 866" stroke="#ff8000" stroke-width="11"/>
        <g stroke="#111" stroke-width="3" stroke-dasharray="6 5"><path d="M387 106L390 66M1112 188L1115 146M1112 190L1194 214M922 868L1006 890"/></g>
        <g stroke="#000" stroke-width="5">
          <path d="M390 65L1115 145" marker-start="url(#ah)" marker-end="url(#ah)"/>
          <path d="M1112 195L221 787" marker-start="url(#ah)" marker-end="url(#ah)"/>
          <path d="M1194 213L1005 889" marker-start="url(#ah)" marker-end="url(#ah)"/>
          <path d="M262 613A176 176 0 1 0 395 805" marker-start="url(#ah)" marker-end="url(#ah)"/>
          <path d="M787 852A145 145 0 0 1 958 736" marker-start="url(#ah)" marker-end="url(#ah)"/>
        </g>
        <g font-size="39" fill="#333" stroke="#fff" stroke-width="15" paint-order="stroke" text-anchor="middle">
          <text transform="translate(758 117) rotate(6)" dy="12">39.561</text>
          <text transform="translate(661 508) rotate(-34)" dy="13">58.07</text>
          <text transform="translate(1105 564) rotate(-75)" dy="13">38.127</text>
          <text transform="translate(846 767) rotate(-40)" dy="13">99</text>
          <text transform="translate(63 876) rotate(62)" dy="13">277</text>
        </g>
        <rect x="236" y="917" width="122" height="87" stroke="#fff" stroke-width="9"/>
        <rect x="236" y="917" width="122" height="87" stroke="#000" stroke-width="9" stroke-dasharray="9 9"/>
        <path d="M247 932L344 981L326 996L354 1028L338 1042L308 1012L290 1034Z" fill="#000" stroke="#fff" stroke-width="6"/>
        <path d="M262 944L334 980" stroke="#ddd" stroke-width="4"/>
      </g>
    </svg>
  </div>
  <div class="flex h-[9px] shrink-0 items-center justify-center"><svg class="h-px w-[17px]"><use href="#griph"/></svg></div>
  <div class="h-5 shrink-0 pl-1 text-[17px] leading-6"><h2>QAD text window - 3.0.4</h2></div>
  <div class="flex h-[30px] shrink-0 overflow-hidden border border-b-0 border-[#8c8c8c] bg-[#c8c8c8]">
    <div class="flex-1 whitespace-nowrap pl-1 pt-px leading-[18px]"><p>Command:</p><p>The coordinate reference system of the project must be a projected coordinate system</p></div>
    <div class="flex w-5 flex-col"><button aria-label="Scroll up" class="flex h-[18px] shrink-0 items-center justify-center border-b-2 border-r-2 border-[#666] bg-[#ccc]"><svg class="h-[7px] w-3 rotate-180"><use href="#arr"/></svg></button><button aria-label="Scroll down" class="mt-px flex h-[18px] shrink-0 items-center justify-center border border-r-2 border-[#888] bg-[#ccc]"><svg class="h-[7px] w-3"><use href="#arr"/></svg></button></div>
  </div>
</section>

<!-- Right dock -->
<aside class="flex w-[352px] shrink-0 flex-col bg-[#efefef] text-right">
  <div class="h-[41px] border-b border-[#a8a8a8]"></div>
  <div class="h-10 border-b border-[#d4d4d4] bg-[#f6f6f6]"></div>
  <div class="h-[41px] border-b border-[#a8a8a8] bg-[#f2f2f2] leading-[44px]">ap</div>
  <div class="h-[26px] border-b border-[#a8a8a8]"></div>
  <div class="h-[55px] border-b border-[#d4d4d4]"></div>
  <div class="h-[35px] border-b border-[#d4d4d4]"></div>
  <div class="flex h-[95px] flex-col items-end justify-between pt-3"><span class="leading-6">Sis</span></div>
  <div class="flex h-[46px] items-start justify-end border-b border-[#d4d4d4]"><span class="h-[30px] w-[3px] rounded-l border border-r-0 border-[#999]"></span></div>
  <div class="h-[35px] border-b border-[#d4d4d4]"></div>
  <div class="mt-3 h-[45px] bg-[#00e600]"></div>
  <div class="h-[45px] bg-[#e60000] leading-[48px]">m</div>
  <div class="h-[45px] bg-[#00e600] leading-[48px]">si</div>
  <div class="flex flex-1 items-end justify-start pl-[26px]"><div class="h-[28px] w-[37px] rounded-t border border-b-0 border-[#b0b0b0] bg-[#f4f4f4] pt-[9px]"><svg class="mx-auto h-[7px] w-3 rotate-180 opacity-50"><use href="#arr"/></svg></div></div>
</aside>
</main>

<!-- Attribute table window -->
<div role="dialog" aria-label="(020400) Dimensi Pengukuran" class="absolute bottom-[27px] right-[10px] top-[33px] flex w-[493px] flex-col overflow-hidden rounded-[10px] border border-[#aaa] bg-[#efefef] shadow-[0_8px_32px_rgba(0,0,0,0.45)]">
  <div class="flex h-[43px] shrink-0 items-center bg-white pl-[11px]">
    <svg class="mr-[10px] size-6 shrink-0" viewBox="52 126 72 72"><circle cx="86" cy="161" r="27" fill="none" stroke="#6ca92c" stroke-width="14"/><path d="M88 162L120 176V194H104Z" fill="#fff"/><path d="M94 166L121 190V195H108L92 178Z" fill="#5b9a2c"/><path d="M78 152L94 158L98 170L90 174Z" fill="#ee7913"/></svg>
    <h2 class="flex-1 whitespace-nowrap text-[17px]">(020400) Dimensi Pengukur...</h2>
    <button aria-label="Minimize" class="flex w-[70px] justify-center"><svg class="size-4"><path d="M0 8H16" stroke="#111" stroke-width="1.500"/></svg></button>
    <button aria-label="Maximize" class="flex w-[70px] justify-center"><svg class="size-4"><rect x="1" y="1" width="14" height="14" rx="1.500" fill="none" stroke="#111" stroke-width="1.800"/></svg></button>
    <button aria-label="Close" class="flex w-[70px] justify-center"><svg class="size-4"><path d="M1 1L15 15M15 1L1 15" stroke="#111" stroke-width="1.600"/></svg></button>
  </div>
  <div class="flex h-11 shrink-0 items-center border-b border-[#b4b4b4] pb-px pl-1 [&>button]:flex [&>button]:w-[33px] [&>button]:justify-center [&>button>svg]:size-6 [&>i]:mx-[5px] [&>i]:h-5 [&>i]:w-px [&>i]:bg-[#ccc]" role="toolbar" aria-label="Table tools">
    <button aria-label="Toggle editing"><svg viewBox="46 258 72 72"><path d="M63 309L92 261L106 268L78 318L62 328Z" fill="#e6c84a" stroke="#777" stroke-width="3"/><path d="M92 261L106 268L102 276L88 268Z" fill="#e8e8e8"/><path d="M82 288L72 308" stroke="#fff3a0" stroke-width="4"/><path d="M63 309L62 328L78 318Z" fill="#888"/></svg></button>
    <button aria-label="Multi edit"><svg viewBox="147 258 72 72"><path d="M154 266H212V282H154ZM154 287H212V303H154ZM154 308H212V323H154Z" fill="#dcdacb" stroke="#c0bfb2" stroke-width="3"/><path d="M184 318L188 304L208 264L216 270L196 308Z" fill="#e8e4de" stroke="#bdb8b2" stroke-width="3"/></svg></button>
    <button aria-label="Save edits"><svg viewBox="247 258 72 72"><path d="M251 264H312V324H259L251 316Z" fill="#d6d6d6" stroke="#bbb" stroke-width="3"/><rect x="263" y="266" width="38" height="24" fill="#eee"/><path d="M266 273H298M266 281H298" stroke="#bbb" stroke-width="3"/><rect x="265" y="300" width="32" height="22" fill="#e8e8e8"/><path d="M290 326L294 310L310 290L316 296L300 320Z" fill="#e0dcd4" stroke="#bbb" stroke-width="2"/></svg></button>
    <i></i>
    <button aria-label="Add feature"><svg viewBox="378 258 72 72"><rect x="382" y="266" width="58" height="56" fill="#eee" stroke="#c6c6c6" stroke-width="3"/><rect x="380" y="280" width="64" height="16" fill="#e5e3cd" stroke="#c6c4b0" stroke-width="3"/><path d="M388 272H434M388 305H412M388 314H412" stroke="#c0c8d0" stroke-width="4"/><rect x="416" y="300" width="32" height="28" rx="3" fill="#ccc"/><path d="M418 308H450L434 326Z" fill="#888"/></svg></button>
    <button aria-label="Delete"><svg viewBox="472 258 72 72"><path d="M482 268H530V280H482V296H492" fill="none" stroke="#ccc9bb" stroke-width="6"/><path d="M484 284H534M490 290H530L527 324H494ZM501 292V320M511 292V320M520 292V320" fill="#e4d4d4" stroke="#c8b0b0" stroke-width="4"/></svg></button>
    <button aria-label="Cut"><svg viewBox="573 258 72 72"><path d="M577 288L626 302M586 270L628 286M580 292L628 286M590 272L626 306" stroke="#c8c8c8" stroke-width="4"/><circle cx="632" cy="284" r="7" fill="none" stroke="#c8c0c0" stroke-width="4"/><circle cx="632" cy="308" r="7" fill="none" stroke="#c8c0c0" stroke-width="4"/></svg></button>
    <button aria-label="Copy"><svg viewBox="672 258 72 72"><path d="M698 266H722L731 276V310H698Z" fill="#f4f4f4" stroke="#bbb" stroke-width="3"/><path d="M686 278H708L718 288V323H686Z" fill="#f6f6f6" stroke="#bbb" stroke-width="3"/><path d="M692 290H704M692 299H712M692 307H712M692 315H712" stroke="#ccc" stroke-width="3"/></svg></button>
    <button aria-label="Paste"><svg viewBox="771 258 72 72"><rect x="785" y="266" width="44" height="56" fill="#ddd9d0" stroke="#bbb" stroke-width="3"/><rect x="790" y="274" width="34" height="44" fill="#f5f5f5" stroke="#bbb"/><rect x="796" y="262" width="22" height="12" fill="#ccc"/><path d="M795 284H819M795 293H819M795 302H819" stroke="#bbb" stroke-width="3"/></svg></button>
    <i></i>
    <button aria-label="Select by expression"><svg viewBox="903 258 72 72"><rect x="926" y="284" width="39" height="38" fill="#fce94f" stroke="#c4a000" stroke-width="3"/><path d="M940 272Q934 263 922 266Q910 270 914 279Q920 285 930 284Q908 286 911 298Q916 308 930 304Q938 302 940 296" fill="none" stroke="#5c3566" stroke-width="6"/></svg></button>
    <button aria-label="Select all"><svg viewBox="1000 258 72 72"><path d="M1006 266H1064V281H1006ZM1006 287H1064V301H1006ZM1006 308H1064V322H1006Z" fill="#fce94f" stroke="#c4a000" stroke-width="3"/></svg></button>
    <button aria-label="Invert selection"><svg viewBox="1099 258 72 72"><path d="M1108 265H1163V320Z" fill="#eee" stroke="#888" stroke-width="3"/><path d="M1105 266L1162 322H1105Z" fill="#fce94f" stroke="#c4a000" stroke-width="3"/></svg></button>
    <button aria-label="Deselect all"><svg viewBox="1200 258 72 72"><rect x="1205" y="265" width="38" height="38" fill="#fce94f" stroke="#c4a000" stroke-width="3"/><rect x="1236" y="297" width="33" height="33" rx="4" fill="#dc2f2f"/><circle cx="1252" cy="313" r="10" fill="#f3a0a0" stroke="#fff" stroke-width="3"/><path d="M1246 320L1259 306" stroke="#fff" stroke-width="3"/></svg></button>
    <button aria-label="Filter"><svg viewBox="1297 258 72 72"><path d="M1306 274H1360L1339 296V326H1327V296Z" fill="#6c96c8" stroke="#4c74a4" stroke-width="2"/><rect x="1304" y="263" width="57" height="11" fill="#fce94f" stroke="#c4a000" stroke-width="2.500"/></svg></button>
    <button aria-label="More" class="ml-auto w-[26px]!"><svg viewBox="1416 258 72 72"><path d="M1436 282L1448 294L1436 306M1456 282L1468 294L1456 306" fill="none" stroke="#333" stroke-width="4.500"/></svg></button>
  </div>
  <div class="flex min-h-0 flex-1 flex-col border-b border-[#b0b0b0] bg-white">
  <table class="w-full table-fixed border-separate border-spacing-0 text-left text-[17px] leading-6 [&_tbody_td]:border-b [&_tbody_td]:border-r [&_tbody_td]:border-[#c6c6c6] [&_tbody_td]:pl-[3px] [&_tbody_td]:pt-[3px] [&_tbody_td.end]:border-0 [&_tbody_th]:h-[45px] [&_tbody_th]:border-b [&_tbody_th]:border-r [&_tbody_th]:border-[#a8a8a8] [&_tbody_th]:bg-gradient-to-b [&_tbody_th]:from-[#fbfbfb] [&_tbody_th]:to-[#ececec] [&_tbody_th]:pl-1 [&_tbody_th]:pt-[3px] [&_tbody_th]:font-normal [&_tr.alt>td]:bg-[#e8e6e2] [&_tr.alt>td.end]:bg-white [&_thead_th]:h-[31px] [&_thead_th]:border-b [&_thead_th]:border-[#a8a8a8] [&_thead_th]:bg-gradient-to-b [&_thead_th]:from-[#fbfbfb] [&_thead_th]:to-[#ececec] [&_thead_th]:pt-[3px] [&_thead_th]:text-center [&_thead_th]:font-normal">
    <colgroup><col class="w-[27px]"><col class="w-[150px]"><col class="w-[192px]"><col></colgroup>
    <thead><tr><th></th><th scope="col" class="border-r">Jenis</th><th scope="col">Nilai</th><td class="bg-[#efefef]"></td></tr></thead>
    <tbody>
      <tr><th scope="row">1</th><td>-</td><td>-</td><td class="end"></td></tr>
      <tr class="alt"><th scope="row">2</th><td>-</td><td>-</td><td class="end"></td></tr>
      <tr><th scope="row">3</th><td>Jarak</td><td>39.561</td><td class="end"></td></tr>
      <tr class="alt"><th scope="row">4</th><td>-</td><td>-</td><td class="end"></td></tr>
      <tr><th scope="row">5</th><td>-</td><td>-</td><td class="end"></td></tr>
      <tr class="alt"><th scope="row">6</th><td>Jarak</td><td>58.07</td><td class="end"></td></tr>
      <tr><th scope="row">7</th><td>-</td><td>-</td><td class="end"></td></tr>
      <tr class="alt"><th scope="row">8</th><td>-</td><td>-</td><td class="end"></td></tr>
      <tr><th scope="row">9</th><td>Jarak</td><td>38.127</td><td class="end"></td></tr>
      <tr class="alt"><th scope="row">10</th><td>Sudut</td><td>98.9279425065057</td><td class="end"></td></tr>
      <tr><th scope="row">11</th><td class="bg-gradient-to-b from-[#fbfdff] to-[#e5f2fc] text-[#222] outline-2 -outline-offset-2 outline-[#00f57c]">Sudut</td><td>277.07415597843317</td><td class="end"></td></tr>
    </tbody>
  </table>
  <div class="w-[27px] flex-1 bg-[#efefef]"></div>
  </div>
  <div class="flex h-[37px] shrink-0 items-center pl-[2px] pr-1">
    <button class="flex h-[31px] w-[173px] items-center gap-1 rounded border border-[#b0b0b0] bg-gradient-to-b from-[#fdfdfd] to-[#eeeeee] pl-1 whitespace-nowrap"><svg class="size-5 shrink-0"><use href="#tableico"/></svg>Show All Features<svg class="ml-auto mr-[2px] mt-3 h-[7px] w-3 shrink-0"><use href="#arr"/></svg></button>
    <button aria-label="Form view" class="ml-auto mr-[6px]"><svg class="size-5" viewBox="0 0 60 60"><rect x="1.500" y="1.500" width="57" height="57" fill="#eef3f8" stroke="#6c93bd" stroke-width="3"/><path d="M8 18H21M8 42H21" stroke="#445" stroke-width="5"/><rect x="26" y="10" width="25" height="16" rx="4" fill="#fff" stroke="#6c93bd" stroke-width="3"/><rect x="26" y="34" width="25" height="16" rx="4" fill="#fff" stroke="#6c93bd" stroke-width="3"/></svg></button>
    <button aria-label="Table view" class="flex size-[31px] items-center justify-center rounded border border-[#b0b0b0] bg-[#dedede]"><svg class="size-5"><use href="#tableico"/></svg></button>
  </div>
</div>
</body>
</html>
